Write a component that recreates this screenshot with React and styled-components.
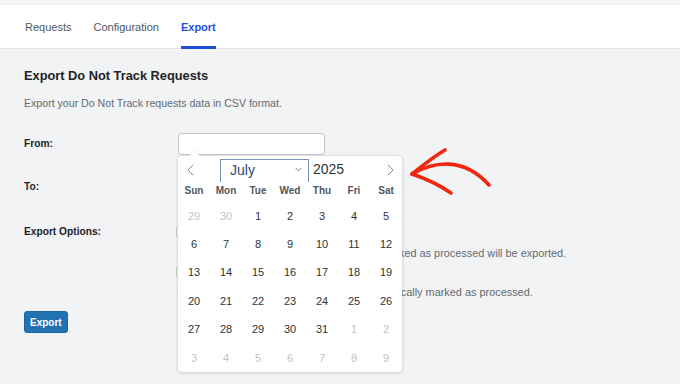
import styled, { createGlobalStyle } from "styled-components";

const GlobalStyle = createGlobalStyle`
  html, body {
    margin: 0;
    padding: 0;
    background: #f2f3f5;
  }
  body {
    font-family: "Liberation Sans", Arial, sans-serif;
    color: #1d2327;
  }
`;

const TABS = ["Requests", "Configuration", "Export"];
const WEEKDAYS = ["Sun", "Mon", "Tue", "Wed", "Thu", "Fri", "Sat"];

// July 2025 grid, six weeks
const buildDays = () => {
  const days = [{ n: 29, muted: true }, { n: 30, muted: true }];
  for (let i = 1; i <= 31; i++) days.push({ n: i, muted: false });
  let next = 1;
  while (days.length < 42) days.push({ n: next++, muted: true });
  return days;
};

const App = () => {
  return (
    <>
      <GlobalStyle />
      <Page>
        <TopStrip />
        <TabBar>
          {TABS.map((t) => (
            <Tab key={t} $active={t === "Export"}>
              {t}
            </Tab>
          ))}
        </TabBar>
        <Content>
          <Heading>Export Do Not Track Requests</Heading>
          <Description>Export your Do Not Track requests data in CSV format.</Description>
          <Form>
            <Row>
              <Label>From:</Label>
              <Field>
                <DateInput />
                <Picker>
                  <PickerHeader>
                    <NavButton aria-label="Previous month">
                      <Chevron dir="left" />
                    </NavButton>
                    <MonthSelect>
                      <span>July</span>
                      <SmallCaret viewBox="0 0 8 5">
                        <path d="M0.5 0.5 L4 4 L7.5 0.5" />
                      </SmallCaret>
                    </MonthSelect>
                    <Year>2025</Year>
                    <NavButton aria-label="Next month" $right>
                      <Chevron dir="right" />
                    </NavButton>
                  </PickerHeader>
                  <DayGrid>
                    {WEEKDAYS.map((d) => (
                      <Weekday key={d}>{d}</Weekday>
                    ))}
                    {buildDays().map((d, i) => (
                      <Day key={i} $muted={d.muted}>
                        {d.n}
                      </Day>
                    ))}
                  </DayGrid>
                </Picker>
              </Field>
            </Row>
            <Row>
              <Label>To:</Label>
              <Field>
                <DateInput />
              </Field>
            </Row>
            <OptionsRow>
              <Label>Export Options:</Label>
              <Options>
                <Option>
                  <CheckLine>
                    <Checkbox type="checkbox" />
                    <span>Unprocessed only</span>
                  </CheckLine>
                  <Hint>Only requests that have not already been marked as processed will be exported.</Hint>
                </Option>
                <Option>
                  <CheckLine>
                    <Checkbox type="checkbox" />
                    <span>Mark as processed</span>
                  </CheckLine>
                  <Hint>All the exported requests will then be automatically marked as processed.</Hint>
                </Option>
              </Options>
            </OptionsRow>
          </Form>
          <ExportButton>Export</ExportButton>
        </Content>
        <Annotation viewBox="0 0 100 60">
          <path d="M4 32 C 25 20, 55 14, 81 43" />
          <path d="M4 32 C 14 24, 25 15, 37 8" />
          <path d="M4 32 C 16 36, 30 42, 43 51" />
        </Annotation>
      </Page>
    </>
  );
};

const Chevron = ({ dir }) => (
  <ChevronSvg viewBox="0 0 8 14">
    {dir === "left" ? <path d="M7 1 L1 7 L7 13" /> : <path d="M1 1 L7 7 L1 13" />}
  </ChevronSvg>
);

const Page = styled.div`
  position: relative;
  width: 680px;
  height: 384px;
  overflow: hidden;
  background: #f2f3f5;
`;

const TopStrip = styled.div`
  height: 4px;
  background: #f6f6f7;
  border-bottom: 1px solid #ececee;
`;

const TabBar = styled.nav`
  display: flex;
  gap: 22px;
  height: 43px;
  padding: 0 25px;
  background: #ffffff;
  border-bottom: 1px solid #e3e5e8;
`;

const Tab = styled.div`
  display: flex;
  align-items: center;
  box-sizing: border-box;
  height: 44px;
  margin-bottom: -1px;
  padding-top: 2px;
  font-size: 11px;
  font-weight: ${(p) => (p.$active ? 600 : 500)};
  color: ${(p) => (p.$active ? "#1e4fd8" : "#50575e")};
  border-bottom: 3px solid ${(p) => (p.$active ? "#1e4fd8" : "transparent")};
`;

const Content = styled.main`
  padding: 18px 24px 0;
`;

const Heading = styled.h2`
  margin: 0;
  font-size: 12.8px;
  line-height: 17px;
  font-weight: 600;
  color: #1d2327;
`;

const Description = styled.p`
  margin: 12px 0 0;
  font-size: 10.6px;
  line-height: 14px;
  color: #646970;
`;

const Form = styled.div`
  display: flex;
  flex-direction: column;
  margin-top: 12px;
`;

const Row = styled.div`
  display: grid;
  grid-template-columns: 154px 1fr;
  align-items: center;
  height: 43px;
`;

const OptionsRow = styled.div`
  display: grid;
  grid-template-columns: 154px 1fr;
  align-items: start;
  margin-top: 18px;
`;

const Label = styled.div`
  font-size: 10.2px;
  font-weight: 600;
  color: #1d2327;
`;

const Field = styled.div`
  position: relative;
  height: 22px;
`;

const DateInput = styled.input`
  box-sizing: border-box;
  display: block;
  width: 147px;
  height: 22px;
  margin: 0;
  background: #ffffff;
  border: 1px solid #c3c6ca;
  border-radius: 3px;
`;

const Picker = styled.div`
  position: absolute;
  top: 23px;
  left: 0;
  z-index: 5;
  width: 224px;
  height: 216px;
  background: #ffffff;
  border-radius: 4px;
  box-shadow: 0 1px 4px rgba(0, 0, 0, 0.14), 0 0 0 1px rgba(0, 0, 0, 0.03);

  &::before {
    content: "";
    position: absolute;
    top: -4px;
    left: 13px;
    width: 7px;
    height: 7px;
    background: #ffffff;
    transform: rotate(45deg);
    box-shadow: -1px -1px 1px rgba(0, 0, 0, 0.05);
  }
`;

const PickerHeader = styled.div`
  position: relative;
  display: flex;
  align-items: flex-start;
  box-sizing: border-box;
  height: 26px;
  padding-top: 3px;
  overflow: hidden;
`;

const NavButton = styled.button`
  display: flex;
  align-items: center;
  justify-content: center;
  width: ${(p) => (p.$right ? "20px" : "24px")};
  height: 23px;
  margin: ${(p) => (p.$right ? "0 2px 0 auto" : "0 18px 0 0")};
  padding: 0;
  background: none;
  border: 0;
`;

const ChevronSvg = styled.svg`
  width: 7px;
  height: 12px;
  fill: none;
  stroke: #7b7f85;
  stroke-width: 1.1;
`;

const MonthSelect = styled.div`
  box-sizing: border-box;
  display: flex;
  align-items: center;
  justify-content: space-between;
  width: 89px;
  height: 30px;
  padding: 0 6px 8px 9px;
  border: 1px solid #7a93b8;
  font-size: 14px;
  color: #2c4a78;
`;

const SmallCaret = styled.svg`
  width: 7px;
  height: 5px;
  fill: none;
  stroke: #5a6f90;
  stroke-width: 1;
`;

const Year = styled.div`
  margin-left: 4px;
  margin-top: 2px;
  font-size: 14px;
  color: #2c3338;
`;

const DayGrid = styled.div`
  display: grid;
  grid-template-columns: repeat(7, 32px);
  grid-template-rows: 18px repeat(6, 28.4px);
  align-items: center;
  justify-items: center;
`;

const Weekday = styled.div`
  font-size: 10px;
  font-weight: 600;
  color: #50575e;
`;

const Day = styled.div`
  padding-top: 4px;
  font-size: 11px;
  color: ${(p) => (p.$muted ? "#c0c3c7" : "#2c3338")};
`;

const Options = styled.div`
  display: flex;
  flex-direction: column;
  gap: 5px;
`;

const Option = styled.div`
  display: flex;
  flex-direction: column;
  gap: 7px;
`;

const CheckLine = styled.label`
  display: flex;
  align-items: center;
  gap: 6px;
  font-size: 10.5px;
  line-height: 13px;
  color: #2c3338;
`;

const Checkbox = styled.input`
  appearance: none;
  box-sizing: border-box;
  width: 11px;
  height: 11px;
  margin: 0 0 0 -2px;
  background: #ffffff;
  border: 1px solid #c6c9cd;
  border-radius: 2px;
`;

const Hint = styled.div`
  font-size: 10.9px;
  line-height: 14px;
  color: #646970;
`;

const ExportButton = styled.button`
  margin-top: 12px;
  height: 22px;
  padding: 0 5px;
  background: #2271b1;
  border: 1px solid #1d64a0;
  border-radius: 3px;
  color: #ffffff;
  font-family: inherit;
  font-size: 10px;
  font-weight: 600;
`;

const Annotation = styled.svg`
  position: absolute;
  left: 408px;
  top: 142px;
  width: 100px;
  height: 60px;
  fill: none;
  stroke: #f0260f;
  stroke-width: 3.6;
  stroke-linecap: round;
`;

export default App;
